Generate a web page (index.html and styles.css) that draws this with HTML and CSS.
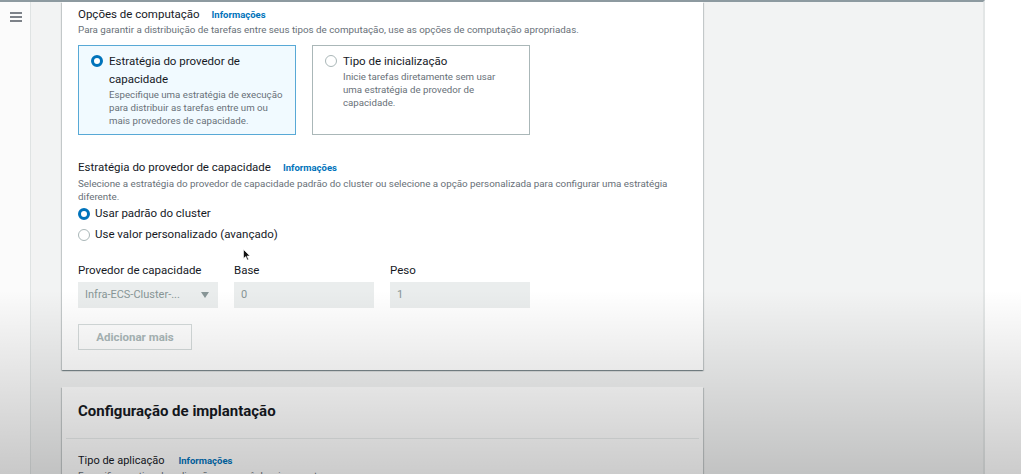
FILE: index.html
```html
<!DOCTYPE html>
<html lang="pt-BR">
<head>
<meta charset="utf-8">
<title>Opções de computação</title>
<link rel="stylesheet" href="styles.css">
</head>
<body>
<div class="screen">
  <div class="app">
    <aside class="sidebar">
      <svg class="burger" width="12" height="10" viewBox="0 0 12 10"><path d="M0 1h12M0 5h12M0 9h12" stroke="#545b64" stroke-width="1.4"/></svg>
    </aside>
    <main class="main">
      <section class="card card-top">
        <h2 class="field-title">Opções de computação <a class="info">Informações</a></h2>
        <p class="desc">Para garantir a distribuição de tarefas entre seus tipos de computação, use as opções de computação apropriadas.</p>
        <div class="tiles">
          <div class="tile tile-on">
            <span class="radio radio-on"></span>
            <div class="tile-body">
              <div class="tile-title">Estratégia do provedor de capacidade</div>
              <div class="tile-desc">Especifique uma estratégia de execução para distribuir as tarefas entre um ou mais provedores de capacidade.</div>
            </div>
          </div>
          <div class="tile">
            <span class="radio"></span>
            <div class="tile-body narrow">
              <div class="tile-title">Tipo de inicialização</div>
              <div class="tile-desc">Inicie tarefas diretamente sem usar uma estratégia de provedor de capacidade.</div>
            </div>
          </div>
        </div>

        <h3 class="field-title sub">Estratégia do provedor de capacidade <a class="info">Informações</a></h3>
        <p class="desc">Selecione a estratégia do provedor de capacidade padrão do cluster ou selecione a opção personalizada para configurar uma estratégia diferente.</p>
        <div class="radio-row"><span class="radio radio-on"></span>Usar padrão do cluster</div>
        <div class="radio-row"><span class="radio"></span>Use valor personalizado (avançado)</div>

        <div class="grid">
          <div class="label">Provedor de capacidade</div>
          <div class="label">Base</div>
          <div class="label">Peso</div>
          <div class="input select">Infra-ECS-Cluster-...<span class="caret"></span></div>
          <div class="input">0</div>
          <div class="input">1</div>
        </div>
        <button class="btn">Adicionar mais</button>
      </section>

      <section class="card card-bottom">
        <h2 class="card-header">Configuração de implantação</h2>
        <div class="card-body">
          <h3 class="field-title small">Tipo de aplicação <a class="info">Informações</a></h3>
          <p class="desc">Especifique o tipo de aplicação que você deseja executar.</p>
        </div>
      </section>
    </main>
    <div class="rest"></div>
  </div>
  <svg class="cursor" width="8" height="12" viewBox="0 0 8 12"><path d="M0.5 0.5v9l2.2-2 1.6 3.6 1.3-.6-1.6-3.5h3z" fill="#111" stroke="#fff" stroke-width="0.6"/></svg>
  <div class="shade"></div>
</div>
</body>
</html>
```

FILE: styles.css
```css
* { box-sizing: border-box; }
html, body { margin: 0; padding: 0; }
body {
  width: 1021px;
  height: 474px;
  overflow: hidden;
  background: #ffffff;
  font-family: Roboto, "Liberation Sans", Arial, sans-serif;
  color: #16191f;
}
.screen { position: relative; width: 1021px; height: 474px; overflow: hidden; }
.app {
  display: flex;
  width: 985px;
  height: 474px;
  background: #f2f3f3;
  border-top: 2px solid #8d9aa0;
  border-right: 2px solid #e3e6e6;
}
.sidebar {
  width: 31px;
  flex: none;
  background: #fbfbfb;
  border-right: 1px solid #dfe3e3;
  padding: 10px 0 0 10px;
}
.burger { display: block; }
.main {
  width: 672px;
  flex: none;
  padding-left: 31px;
}
.card {
  background: #ffffff;
  box-shadow: 0 1px 1px rgba(0, 28, 36, 0.3), 1px 1px 1px rgba(0, 28, 36, 0.15), -1px 1px 1px rgba(0, 28, 36, 0.15);
}
.card-top { padding: 4px 16px 20px; }
.field-title {
  margin: 0;
  font-size: 11.5px;
  font-weight: 400;
  line-height: 16px;
  display: flex;
  align-items: baseline;
}
.info {
  color: #0073bb;
  font-weight: 700;
  font-size: 9.5px;
  margin-left: 12px;
}
.desc {
  margin: 0;
  font-size: 9.8px;
  line-height: 13px;
  color: #687078;
}
.tiles {
  display: flex;
  gap: 16px;
  margin-top: 9px;
}
.tile {
  width: 218px;
  height: 90px;
  border: 1px solid #aab7b8;
  padding: 6px 12px 0 12px;
  display: flex;
  align-items: flex-start;
  gap: 6px;
}
.tile-on { border-color: #58a9d6; background: #f1faff; }
.tile .radio { margin-top: 3px; }
.tile-body { width: 176px; }
.tile-body.narrow { width: 160px; }
.tile-title { font-size: 11.5px; line-height: 18px; }
.tile-desc { font-size: 9.7px; line-height: 13px; color: #687078; }
.radio {
  flex: none;
  width: 12px;
  height: 12px;
  border-radius: 50%;
  border: 1px solid #aab7b8;
  background: #fff;
  display: inline-block;
}
.radio-on { border: 3.5px solid #0073bb; }
.sub { margin-top: 23px; line-height: 18px; }
.radio-row {
  display: flex;
  align-items: center;
  gap: 5px;
  font-size: 11.5px;
  line-height: 21px;
}
.grid {
  display: grid;
  grid-template-columns: 140px 140px 140px;
  column-gap: 16px;
  row-gap: 4px;
  margin-top: 17px;
}
.label { font-size: 11.5px; line-height: 16px; }
.input {
  height: 26px;
  background: #eaeded;
  color: #879596;
  font-size: 11px;
  line-height: 26px;
  padding: 0 7px;
  display: flex;
  align-items: center;
  justify-content: space-between;
}
.caret {
  width: 0; height: 0;
  border-left: 4px solid transparent;
  border-right: 4px solid transparent;
  border-top: 6px solid #879596;
  margin-right: 2px;
}
.btn {
  display: block;
  margin-top: 16px;
  width: 114px;
  height: 26px;
  background: #ffffff;
  border: 1px solid #d5dbdb;
  color: #aab7b8;
  font-family: inherit;
  font-weight: 700;
  font-size: 11.5px;
  padding: 0;
}
.card-bottom { margin-top: 17px; height: 120px; }
.card-header {
  margin: 0 4px;
  padding: 14px 12px 17px;
  font-size: 15px;
  line-height: 20px;
  font-weight: 700;
  border-bottom: 1px solid #eaeded;
}
.card-body { padding: 14px 16px 0; }
.small { font-size: 11px; }
.small .info { margin-left: 14px; }
.rest { flex: 1; }
.cursor { position: absolute; left: 243px; top: 249px; }
.shade {
  position: absolute;
  left: 0; top: 0;
  width: 1021px; height: 474px;
  pointer-events: none;
  background: linear-gradient(to bottom, rgba(0,0,0,0) 0, rgba(0,0,0,0) 290px, rgba(0,0,0,0.2) 474px);
}
```
